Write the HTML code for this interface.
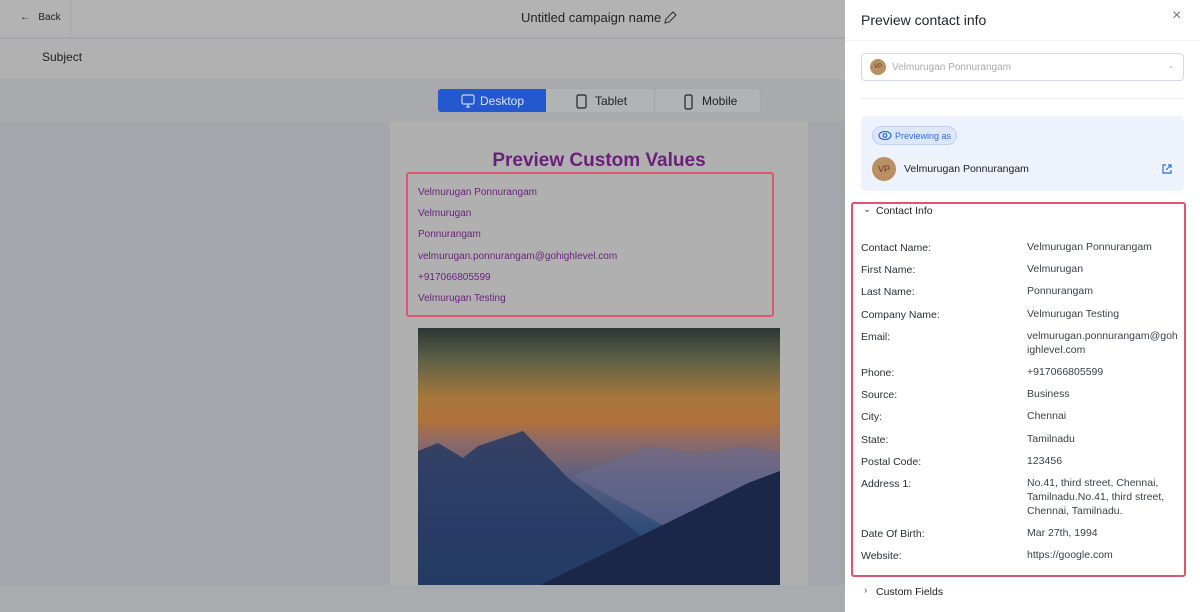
<!DOCTYPE html>
<html><head><meta charset="utf-8"><style>
*{box-sizing:border-box;margin:0;padding:0}
body{width:1200px;height:612px;overflow:hidden;position:relative;font-family:"Liberation Sans",sans-serif;background:#a3a6ab}
.abs{position:absolute}
.lbl{position:absolute;left:10px;font-size:10.5px;color:#2b2f36}
.val{position:absolute;left:176px;font-size:10.5px;color:#3b3f46;line-height:14px}
</style></head><body>
<div class="abs" style="left:0;top:0;width:845px;height:38px;background:#b3b3b3;border-bottom:1px solid #a9a9a9"></div>
<div class="abs" style="left:70px;top:0;width:1px;height:38px;background:#a6a6a6"></div>
<div class="abs" style="left:20px;top:12px;font-size:10px;color:#222">&#8592;&nbsp;&nbsp; Back</div>
<div class="abs" style="left:521px;top:10px;font-size:13px;color:#222">Untitled campaign name</div>
<svg class="abs" style="left:662px;top:10px" width="16" height="16" viewBox="0 0 16 16"><path d="M3 13l1-4 7-7 3 3-7 7z" fill="none" stroke="#333" stroke-width="1.1"/></svg>
<div class="abs" style="left:0;top:39px;width:845px;height:40px;background:#b1b1b1"></div>
<div class="abs" style="left:42px;top:50px;font-size:12px;color:#222">Subject</div>
<div class="abs" style="left:0;top:79px;width:845px;height:43px;background:#a9aaac"></div>
<div class="abs" style="left:437px;top:88px;width:324px;height:25px;border-radius:4px;background:#b2b3b5;border:1px solid #a8a8a8;overflow:hidden">
 <div class="abs" style="left:0;top:0;width:108px;height:25px;background:#2358cf"></div>
 <div class="abs" style="left:216px;top:0;width:1px;height:25px;background:#a5a5a5"></div>
 <svg class="abs" style="left:23px;top:5px" width="14" height="14"><rect x="1" y="1" width="12" height="9" rx="1.5" fill="none" stroke="#c8d4f0" stroke-width="1.2"/><path d="M5 13h4M7 10v3" stroke="#c8d4f0" stroke-width="1.2"/></svg>
 <div class="abs" style="left:42px;top:5px;font-size:12px;color:#dce4f7">Desktop</div>
 <svg class="abs" style="left:138px;top:5px" width="12" height="15"><rect x="1" y="1" width="9" height="13" rx="1.5" fill="none" stroke="#222" stroke-width="1.2"/></svg>
 <div class="abs" style="left:157px;top:5px;font-size:12px;color:#222">Tablet</div>
 <svg class="abs" style="left:245px;top:5px" width="12" height="16"><rect x="2" y="1" width="7" height="14" rx="1.5" fill="none" stroke="#222" stroke-width="1.2"/></svg>
 <div class="abs" style="left:264px;top:5px;font-size:12px;color:#222">Mobile</div>
</div>
<div class="abs" style="left:390px;top:122px;width:418px;height:463px;background:#b0b0b0"></div>
<div class="abs" style="left:390px;top:150px;width:418px;text-align:center;font-size:19px;font-weight:bold;color:#6a1f7c">Preview Custom Values</div>
<div class="abs" style="left:406px;top:172px;width:368px;height:145px;border:2px solid #e0546f;border-radius:3px"></div>
<div class="abs" style="left:418px;top:182px;font-size:10px;color:#6a1f7c;line-height:21.2px">Velmurugan Ponnurangam<br>Velmurugan<br>Ponnurangam<br>velmurugan.ponnurangam@gohighlevel.com<br>+917066805599<br>Velmurugan Testing</div>
<div class="abs" style="left:418px;top:328px;width:362px;height:258px;background:linear-gradient(180deg,#2c3534 0%,#5d6046 12%,#a7773b 27%,#b0713a 36%,#8e6a66 44%,#5c5f80 58%,#2e4d78 78%,#1c476d 100%);overflow:hidden">
 <svg width="362" height="258" style="position:absolute;left:0;top:0"><path d="M0 123 L20 115 L45 130 L60 118 L105 103 L150 150 L245 225 L362 150 L362 258 L0 258Z" fill="#263a63" opacity=".85"/><path d="M155 148 L230 118 L280 125 L330 118 L362 125 L362 190 L250 200Z" fill="#6a6a8e" opacity=".6"/><path d="M120 258 L300 170 L330 155 L362 143 L362 258Z" fill="#1b2748"/></svg>
</div>
<div class="abs" style="left:0;top:585px;width:845px;height:27px;background:#a9acae"></div>
<div class="abs" style="left:845px;top:0;width:355px;height:612px;background:#fff">
 <div class="abs" style="left:16px;top:12px;font-size:14px;color:#1f2329">Preview contact info</div>
 <div class="abs" style="left:327px;top:7px;font-size:16px;color:#777">&#215;</div>
 <div class="abs" style="left:0;top:40px;width:355px;height:1px;background:#f0f0f2"></div>
 <div class="abs" style="left:16px;top:53px;width:323px;height:28px;border:1.5px solid #d5d8f1;border-radius:4px"></div>
 <div class="abs" style="left:25px;top:59px;width:16px;height:16px;border-radius:50%;background:#b99064;font-size:6px;color:#5a3c20;text-align:center;line-height:16px">VP</div>
 <div class="abs" style="left:47px;top:62px;font-size:10px;color:#aaa">Velmurugan Ponnurangam</div>
 <div class="abs" style="left:322px;top:60px;font-size:9px;color:#bbb">&#8964;</div>
 <div class="abs" style="left:16px;top:98px;width:323px;height:1px;background:#eceef0"></div>
 <div class="abs" style="left:16px;top:116px;width:323px;height:75px;background:#eef2fc;border-radius:5px"></div>
 <div class="abs" style="left:27px;top:126px;width:85px;height:19px;border-radius:10px;background:#dde7fb;border:1px solid #bcd0f5"></div>
 <svg class="abs" style="left:33px;top:130px" width="14" height="11"><ellipse cx="7" cy="5.5" rx="6" ry="4" fill="none" stroke="#2d6fd8" stroke-width="1.2"/><circle cx="7" cy="5.5" r="1.8" fill="none" stroke="#2d6fd8" stroke-width="1.2"/></svg>
 <div class="abs" style="left:50px;top:131px;font-size:9px;color:#2d6fd8">Previewing as</div>
 <div class="abs" style="left:27px;top:157px;width:24px;height:24px;border-radius:50%;background:#b99064;font-size:9px;color:#5a3c20;text-align:center;line-height:24px">VP</div>
 <div class="abs" style="left:59px;top:163px;font-size:10.5px;color:#222">Velmurugan Ponnurangam</div>
 <svg class="abs" style="left:316px;top:163px" width="12" height="12"><path d="M5 2H2v8h8V7M7 2h3v3M10 2L5 7" fill="none" stroke="#2d6fd8" stroke-width="1.2"/></svg>
 <div class="abs" style="left:6px;top:202px;width:335px;height:375px;border:2px solid #e0546f;border-radius:3px"></div>
 <div class="abs" style="left:18px;top:204px;font-size:10px;color:#555">&#8964;</div>
 <div class="abs" style="left:31px;top:205px;font-size:10.5px;color:#222">Contact Info</div>
 <div class="abs" style="left:6px;top:2px;width:335px">
  <div class="lbl" style="top:240px">Contact Name:</div><div class="val" style="top:238px">Velmurugan Ponnurangam</div>
  <div class="lbl" style="top:262px">First Name:</div><div class="val" style="top:260px">Velmurugan</div>
  <div class="lbl" style="top:284px">Last Name:</div><div class="val" style="top:282px">Ponnurangam</div>
  <div class="lbl" style="top:307px">Company Name:</div><div class="val" style="top:305px">Velmurugan Testing</div>
  <div class="lbl" style="top:329px">Email:</div><div class="val" style="top:327px;width:152px;word-break:break-all">velmurugan.ponnurangam@gohighlevel.com</div>
  <div class="lbl" style="top:365px">Phone:</div><div class="val" style="top:363px">+917066805599</div>
  <div class="lbl" style="top:387px">Source:</div><div class="val" style="top:385px">Business</div>
  <div class="lbl" style="top:409px">City:</div><div class="val" style="top:407px">Chennai</div>
  <div class="lbl" style="top:432px">State:</div><div class="val" style="top:430px">Tamilnadu</div>
  <div class="lbl" style="top:454px">Postal Code:</div><div class="val" style="top:452px">123456</div>
  <div class="lbl" style="top:476px">Address 1:</div><div class="val" style="top:474px">No.41, third street, Chennai,<br>Tamilnadu.No.41, third street,<br>Chennai, Tamilnadu.</div>
  <div class="lbl" style="top:526px">Date Of Birth:</div><div class="val" style="top:524px">Mar 27th, 1994</div>
  <div class="lbl" style="top:548px">Website:</div><div class="val" style="top:546px">https://google.com</div>
 </div>
 <div class="abs" style="left:19px;top:585px;font-size:10px;color:#555">&#8250;</div>
 <div class="abs" style="left:31px;top:586px;font-size:10.5px;color:#222">Custom Fields</div>
</div>
</body></html>
